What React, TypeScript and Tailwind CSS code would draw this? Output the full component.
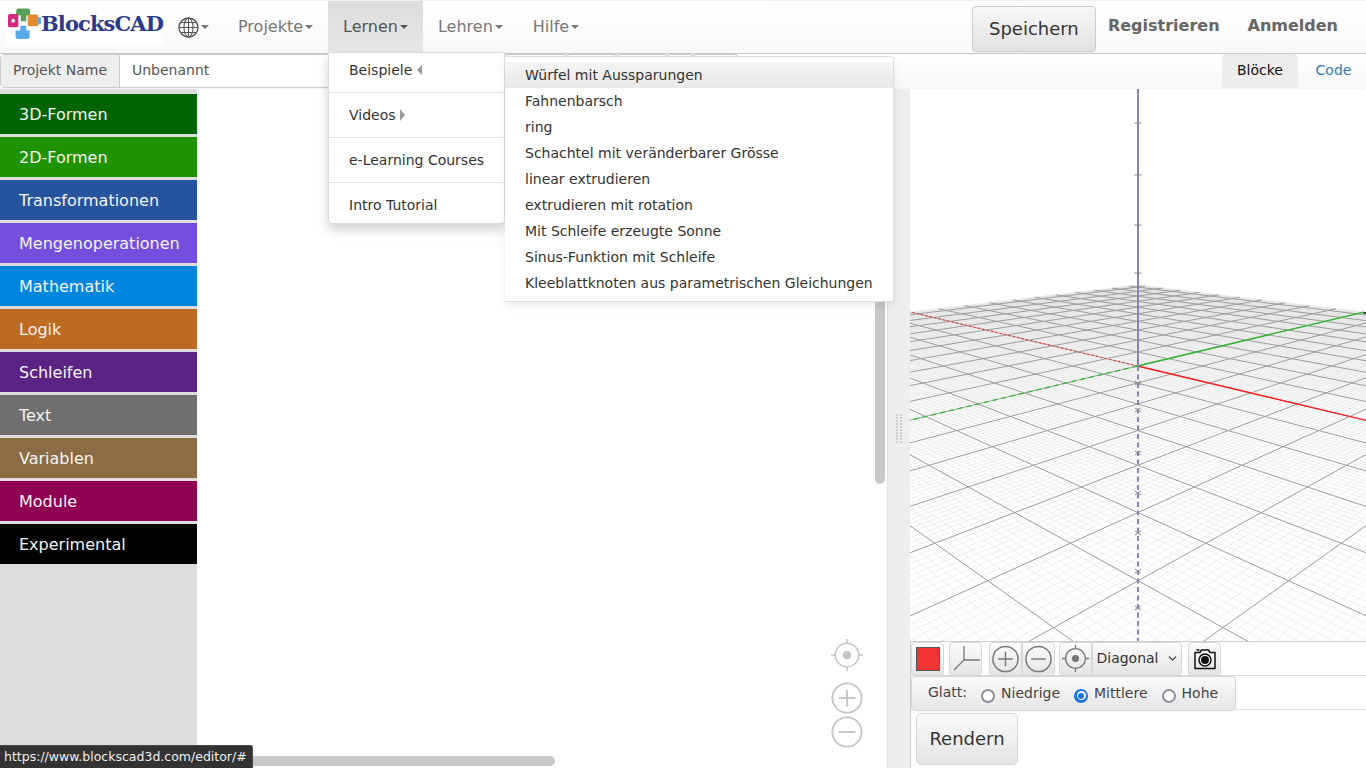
import React from "react";
import { ChevronDown } from "lucide-react";

const F = "font-['DejaVu_Sans','Liberation_Sans',sans-serif]";

const blocks: [string, string][] = [
  ["3D-Formen", "bg-[#006400]"],
  ["2D-Formen", "bg-[#209303]"],
  ["Transformationen", "bg-[#26549f]"],
  ["Mengenoperationen", "bg-[#744fde]"],
  ["Mathematik", "bg-[#0186e0]"],
  ["Logik", "bg-[#bd6a22]"],
  ["Schleifen", "bg-[#5b2383]"],
  ["Text", "bg-[#6f6f6f]"],
  ["Variablen", "bg-[#8b6c45]"],
  ["Module", "bg-[#8f0052]"],
  ["Experimental", "bg-black"],
];

const examples = [
  "Würfel mit Aussparungen",
  "Fahnenbarsch",
  "ring",
  "Schachtel mit veränderbarer Grösse",
  "linear extrudieren",
  "extrudieren mit rotation",
  "Mit Schleife erzeugte Sonne",
  "Sinus-Funktion mit Schleife",
  "Kleeblattknoten aus parametrischen Gleichungen",
];

const K = 0.0475;
const EDGE = 10.5;
const O = [227.5, 277];
const VR = [456 - 910, 204 - 89];
const VG = [1818 - 910, 204 - 89];
function proj(s: number, t: number): [number, number] {
  const a = s * K;
  const b = t * K;
  const w = 1 + a + b;
  return [(O[0] + a * VR[0] + b * VG[0]) / w, (O[1] + a * VR[1] + b * VG[1]) / w];
}
function seg(s0: number, t0: number, s1: number, t1: number) {
  const p = proj(s0, t0);
  const q = proj(s1, t1);
  return `M${p[0].toFixed(2)} ${p[1].toFixed(2)}L${q[0].toFixed(2)} ${q[1].toFixed(2)}`;
}
const minSum = (0.09 - 1) / K;
function gridPath(step: number) {
  let d = "";
  const n = Math.round((EDGE * 2) / step);
  for (let j = 0; j <= n; j++) {
    const i = -EDGE + j * step;
    if (Math.abs(i - Math.round(i)) < 0.001) continue;
    const from = Math.max(-EDGE, minSum - i);
    d += seg(i, from, i, EDGE);
    d += seg(from, i, EDGE, i);
  }
  return d;
}
const fine = gridPath(0.1);
const big = (() => {
  let d = "";
  for (let i = -10; i <= 10; i++) {
    const from = Math.max(-EDGE, minSum - i);
    d += seg(i, from, i, EDGE);
    d += seg(from, i, EDGE, i);
  }
  return d;
})();

function Viewer() {
  const up = [123, 175, 225, 273];
  const down = [383, 410, 453, 493, 533, 571, 608];
  return (
    <svg width="456" height="552" viewBox="0 0 456 552" className="block bg-white">
      <path d={fine} stroke="#e4e4e4" strokeWidth="0.55" fill="none" />
      <path d={big} stroke="#9c9c9c" strokeWidth="1" fill="none" />
      <path d={seg(0, 0, -EDGE * 1.6, 0)} stroke="#ff1f1f" strokeWidth="1.3" fill="none" />
      <path d={seg(0, 0, EDGE, 0)} stroke="#ff3030" strokeWidth="1.2" strokeDasharray="2 2.5" fill="none" />
      <path d={seg(0, 0, 0, EDGE)} stroke="#2fb52f" strokeWidth="1.3" fill="none" />
      <path d={seg(0, 0, 0, -EDGE * 1.6)} stroke="#2fc02f" strokeWidth="1.3" strokeDasharray="5 4" fill="none" />
      <path d="M228 0V277" stroke="#8585bb" strokeWidth="2" fill="none" />
      <path d="M228 277V552" stroke="#8585bb" strokeWidth="2" strokeDasharray="5 3.5" fill="none" />
      {up.map((y) => (
        <path key={y} d={`M224.5 ${y - 89}h7`} stroke="#888" strokeWidth="1" />
      ))}
      {down.map((y) => (
        <path key={y} d={`M225 ${y - 91}l6 4m0 -4l-6 4`} stroke="#888" strokeWidth="1" fill="none" />
      ))}
      <path d="M453.5 224h2.5" stroke="#111" strokeWidth="1.5" />
    </svg>
  );
}

function Caret({ dir = "down" }: { dir?: "down" | "left" | "right" }) {
  if (dir === "left")
    return <span className="inline-block w-0 h-0 border-y-[5px] border-y-transparent border-r-[5px] border-r-[#999]" />;
  if (dir === "right")
    return <span className="inline-block w-0 h-0 border-y-[6px] border-y-transparent border-l-[5px] border-l-[#999]" />;
  return <span className="inline-block w-0 h-0 ml-[2px] border-x-[4px] border-x-transparent border-t-[4px] border-t-current" />;
}

function Logo() {
  return (
    <div className="ml-[6px] mt-[11px] h-[33px] w-[157px] bg-white relative flex items-start">
      <svg width="36" height="31" viewBox="0 0 36 33" className="absolute left-0 top-[-4px]">
        <path d="M10 1.500a2 2 0 0 1 2-1h10a2.500 2.500 0 0 1 2.500 2.500v2.500a2.500 2.500 0 0 1-2.500 2.500h-1.500v6h-6v-6H12a2.500 2.500 0 0 1-2.500-2.500z" fill="#5aa05a" />
        <path d="M14 19h6.500v5H24v6a3 3 0 0 1-3 3H12a3 3 0 0 1-3-3v-6h5z" fill="#5aa9ea" />
        <rect x="1" y="6.500" width="11" height="14" rx="2" fill="#d42a82" />
        <circle cx="6.500" cy="13.500" r="2" fill="#fff" />
        <rect x="22" y="7" width="11" height="12.500" rx="2" fill="#e58a2e" />
        <rect x="33" y="9.500" width="3" height="8" rx="1" fill="#5aa9ea" />
      </svg>
      <span className="ml-[35px] mt-[-3px] font-['DejaVu_Serif',serif] font-bold text-[21px] leading-[30px] text-[#2b3a8c] tracking-[-0.9px] whitespace-nowrap">
        BlocksCAD
      </span>
    </div>
  );
}

function Globe() {
  return (
    <svg width="21" height="21" viewBox="0 0 21 21" fill="none" stroke="#555" strokeWidth="1.100">
      <circle cx="10.500" cy="10.500" r="9.500" strokeWidth="1.400" />
      <ellipse cx="10.500" cy="10.500" rx="4.500" ry="9.500" />
      <path d="M10.500 1v19M1 10.500h19M2.500 5.500h16M2.500 15.500h16" />
    </svg>
  );
}

function Target({ color, size = 30 }: { color: string; size?: number }) {
  return (
    <svg width={size} height={size} viewBox="0 0 30 30" fill="none" stroke={color} strokeWidth="1.500">
      <circle cx="15" cy="15" r="11" />
      <circle cx="15" cy="15" r="4" fill={color} stroke="none" />
      <path d="M15 0v4M15 26v4M0 15h4M26 15h4" />
    </svg>
  );
}
function PlusMinus({ color, plus, size = 32, sw = 1.500 }: { color: string; plus?: boolean; size?: number; sw?: number }) {
  return (
    <svg width={size} height={size} viewBox="0 0 32 32" fill="none" stroke={color} strokeWidth={sw}>
      <circle cx="16" cy="16" r="13" />
      <path d={plus ? "M8.500 16h15M16 8.500v15" : "M8.500 16h15"} />
    </svg>
  );
}

const btn =
  "flex items-center justify-center h-[34px] bg-gradient-to-b from-[#fcfcfc] to-[#e4e4e4] border border-[#d8d8d8]";

function Radio({ on }: { on?: boolean }) {
  return on ? (
    <span className="block mt-[4px] w-[14px] h-[14px] rounded-full bg-[#1a73e8] flex items-center justify-center">
      <span className="w-[9px] h-[9px] rounded-full bg-white flex items-center justify-center">
        <span className="w-[6px] h-[6px] rounded-full bg-[#1a73e8]" />
      </span>
    </span>
  ) : (
    <span className="block mt-[4px] w-[14px] h-[14px] rounded-full border-2 border-[#8f8f9d] bg-white" />
  );
}

export default function App() {
  return (
    <div className={`${F} relative w-[1366px] h-[768px] overflow-hidden bg-white text-[#333] text-[14px] flex flex-col`}>
      {/* nav */}
      <div className="h-[54px] shrink-0 flex border-t border-t-[#f0f0f0] border-b border-b-[#c8c8c8] bg-gradient-to-b from-white to-[#f8f8f8]">
        <Logo />
        <div className="ml-[15px] flex items-center text-[#777]">
          <Globe />
          <Caret />
        </div>
        <div className="ml-[14px] flex text-[16px] text-[#777]">
          <div className="px-[15px] flex items-center">Projekte<Caret /></div>
          <div className="px-[15px] flex items-center bg-gradient-to-b from-[#dcdcdc] to-[#e8e8e8] text-[#555]">Lernen<Caret /></div>
          <div className="px-[15px] flex items-center">Lehren<Caret /></div>
          <div className="px-[15px] flex items-center">Hilfe<Caret /></div>
        </div>
        <div className="ml-auto flex items-start">
          <button className="mt-[5px] w-[124px] h-[46px] pb-[2px] rounded-[4px] border border-[#ccc] bg-gradient-to-b from-[#f8f8f8] to-[#e2e2e2] text-[18px] text-[#333]">
            Speichern
          </button>
          <span className="ml-[12px] mt-[13px] font-bold text-[16px] text-[#666]">Registrieren</span>
          <span className="ml-[28px] mr-[28px] mt-[13px] font-bold text-[16px] text-[#666]">Anmelden</span>
        </div>
      </div>

      {/* row 2 */}
      <div className="h-[35px] shrink-0 flex bg-gradient-to-b from-white to-[#f7f7f7]">
        <div className="w-[505px] h-[34px] flex border border-[#ccc] rounded-l-[4px] bg-white">
          <div className="w-[119px] flex items-center pl-[12px] pb-[2px] bg-[#eee] border-r border-[#ccc] text-[#555]">Projekt Name</div>
          <div className="flex items-center pl-[12px] pb-[2px] text-[#555]">Unbenannt</div>
        </div>
        <div className="flex">
          {[62, 50, 50, 26, 45].map((w, i) => (
            <div key={i} style={{ width: w }} className="h-[4px] border border-b-0 border-[#ccc] rounded-t-[3px]" />
          ))}
        </div>
        <div className="ml-auto flex">
          <div className="w-[76px] h-[34px] pb-[2px] flex items-center justify-center bg-[#eee] rounded-[4px] text-[#111]">Blöcke</div>
          <div className="w-[68px] pb-[2px] pl-[3px] flex items-center justify-center text-[#337ab7]">Code</div>
        </div>
      </div>

      {/* body */}
      <div className="flex-1 flex min-h-0">
        <div className="w-[197px] shrink-0 bg-[#ddd] pt-[5px] flex flex-col gap-[3px]">
          {blocks.map(([name, cls]) => (
            <div key={name} className={`${cls} h-[40px] pt-[1px] flex items-center pl-[19px] text-[16px] text-[#f4f4f4]`}>
              {name}
            </div>
          ))}
        </div>
        <div className="flex-1 relative bg-white">
          <div className="absolute left-[678px] top-[190px] w-[10px] h-[205px] rounded-b-[5px] bg-[#c8c8c8]" />
          <div className="absolute left-0 bottom-[2px] w-[358px] h-[10px] rounded-r-[5px] bg-[#c8c8c8]" />
          <div className="absolute left-[634px] top-[550px]">
            <Target color="#c6c6c6" size={32} />
          </div>
          <div className="absolute left-[632px] top-[591px]">
            <PlusMinus color="#c6c6c6" plus size={36} sw={1.700} />
          </div>
          <div className="absolute left-[632px] top-[625px]">
            <PlusMinus color="#c6c6c6" size={36} sw={1.700} />
          </div>
        </div>
        <div className="w-[23px] shrink-0 bg-[#eee] border-l border-[#e2e2e2] flex items-center justify-center">
          <div className="grid grid-cols-2 gap-x-[2px] gap-y-[1px]">
            {Array.from({ length: 20 }).map((_, i) => (
              <span key={i} className="w-[2px] h-[2px] bg-[#cfcfcf]" />
            ))}
          </div>
        </div>
        <div className="w-[456px] shrink-0 flex flex-col">
          <Viewer />
          <div className="flex-1 border-t border-l border-[#ccc] flex flex-col">
            <div className="h-[34px] flex items-center border-b border-[#ddd]">
              <div className={`${btn} w-[33px] rounded-[4px]`}>
                <span className="w-[24px] h-[24px] bg-[#f03434] border border-[#555]" />
              </div>
              <div className={`${btn} w-[33px] ml-[5px] rounded-[4px]`}>
                <svg width="30" height="28" viewBox="0 0 30 28" fill="none" stroke="#777" strokeWidth="1.300">
                  <path d="M13 1v14h16M13 15L3 25" />
                </svg>
              </div>
              <div className={`${btn} w-[33px] ml-[7px] rounded-l-[4px]`}>
                <PlusMinus color="#777" plus size={32} sw={1.500} />
              </div>
              <div className={`${btn} w-[33px] rounded-r-[4px]`}>
                <PlusMinus color="#777" size={32} sw={1.500} />
              </div>
              <div className={`${btn} w-[33px] ml-[4px] rounded-l-[4px]`}>
                <Target color="#777" size={27} />
              </div>
              <div className={`${btn} w-[90px] rounded-r-[4px] pl-[1px] text-[#333] gap-[7px]`}>
                <span>Diagonal</span>
                <ChevronDown size={13} strokeWidth={2} />
              </div>
              <div className={`${btn} w-[33px] ml-[6px] rounded-[4px]`}>
                <svg width="24" height="24" viewBox="0 0 24 24" fill="none" stroke="#111" strokeWidth="1.500">
                  <path d="M2 5.500h5l1.500-2.500h7l1.500 2.500h5v16H2z" strokeLinejoin="round" />
                  <circle cx="12" cy="13" r="6" />
                  <circle cx="12" cy="13" r="3.200" fill="#111" />
                  <path d="M3.500 3h3" />
                </svg>
              </div>
            </div>
            <div className="h-[34px] relative border-b border-[#ddd]">
              <div className="absolute left-0 top-0 w-[325px] h-[35px] rounded-[4px] border border-[#d4d4d4] bg-gradient-to-b from-[#fafafa] to-[#e6e6e6] flex items-center pl-[16px] text-[14px] text-[#444]">
                <span className="mt-[-3px]">Glatt:</span>
                <span className="ml-[14px]"><Radio /></span>
                <span className="ml-[6px]">Niedrige</span>
                <span className="ml-[14px]"><Radio on /></span>
                <span className="ml-[6px]">Mittlere</span>
                <span className="ml-[14px]"><Radio /></span>
                <span className="ml-[6px]">Hohe</span>
              </div>
            </div>
            <div className="pl-[5px] pt-[3px]">
              <button className="w-[102px] h-[52px] pb-[2px] rounded-[5px] border border-[#d4d4d4] bg-gradient-to-b from-[#fafafa] to-[#e4e4e4] text-[18px] text-[#333]">
                Rendern
              </button>
            </div>
          </div>
        </div>
      </div>

      {/* Lernen menu */}
      <div className="absolute left-[328px] top-[52px] w-[177px] h-[172px] bg-white rounded-b-[4px] border border-[#ddd] shadow-[0_6px_12px_rgba(0,0,0,0.175)] z-10 text-[#333]">
        <div className="h-[39px] pb-[5px] flex items-center pl-[20px] gap-[5px]">Beispiele <Caret dir="left" /></div>
        <div className="h-px bg-[#e5e5e5]" />
        <div className="h-[44px] flex items-center pl-[20px] gap-[4px]">Videos <Caret dir="right" /></div>
        <div className="h-px bg-[#e5e5e5]" />
        <div className="h-[44px] flex items-center pl-[20px]">e-Learning Courses</div>
        <div className="h-px bg-[#e5e5e5]" />
        <div className="h-[44px] flex items-center pl-[20px]">Intro Tutorial</div>
      </div>

      {/* submenu */}
      <div className="absolute left-[505px] top-[56px] w-[389px] h-[246px] bg-white rounded-r-[4px] border border-l-0 border-[#ddd] shadow-[0_4px_8px_rgba(0,0,0,0.08)] z-10 pt-[5px]">
        {examples.map((e, i) => (
          <div
            key={e}
            className={`h-[26px] flex items-center pl-[20px] whitespace-nowrap ${i === 0 ? "bg-gradient-to-b from-[#f5f5f5] to-[#e8e8e8]" : ""}`}
          >
            {e}
          </div>
        ))}
      </div>

      {/* status */}
      <div className="absolute left-0 bottom-0 h-[23px] w-[253px] bg-[#333] rounded-tr-[3px] border-t border-r border-[#4a4a4a] flex items-center pl-[4px] text-[12.500px] text-[#eee] whitespace-nowrap z-20">
        https://www.blockscad3d.com/editor/#
      </div>
    </div>
  );
}
